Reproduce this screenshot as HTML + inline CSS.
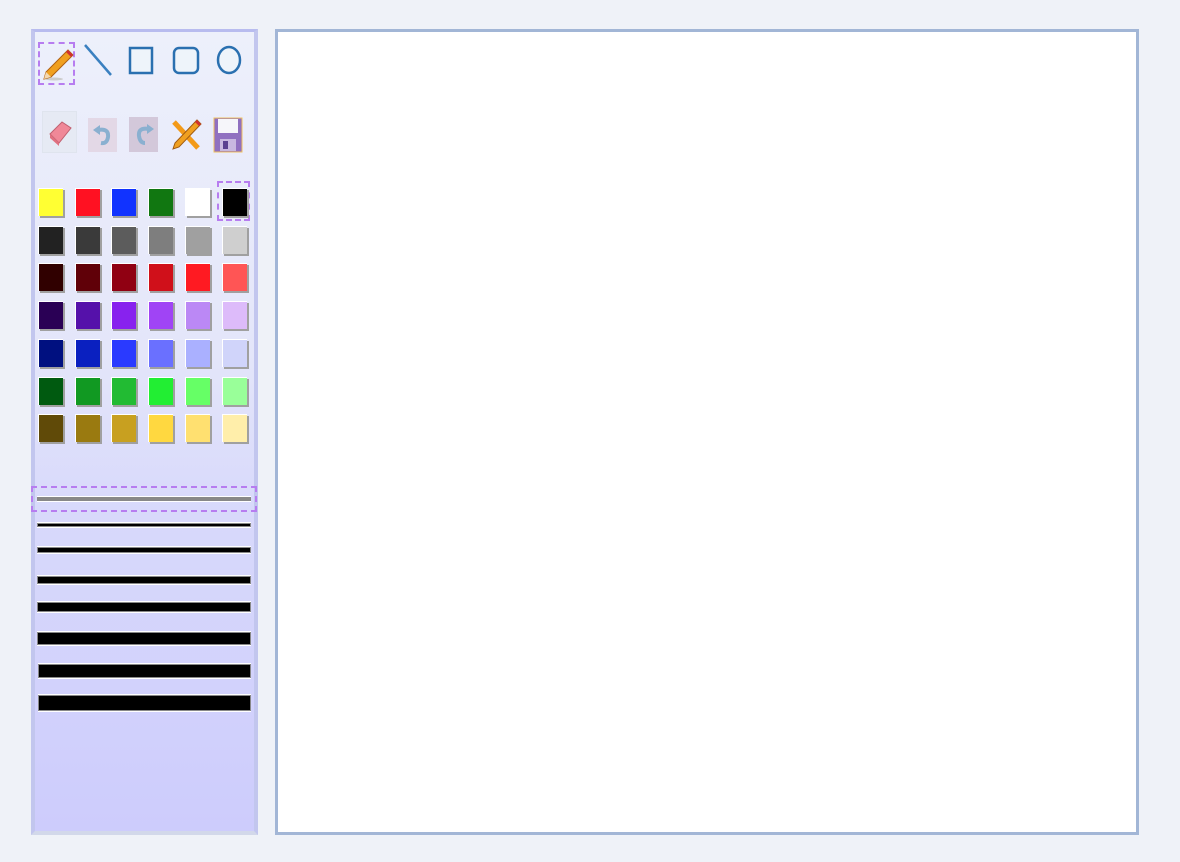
<!DOCTYPE html>
<html><head><meta charset="utf-8"><style>
*{margin:0;padding:0;box-sizing:border-box}
body{width:1180px;height:862px;background:#eff2f8;position:relative;overflow:hidden;font-family:"Liberation Sans",sans-serif}
#panel{position:absolute;left:31px;top:29px;width:227px;height:806px;background:linear-gradient(#edf0fb 0%,#e4e6fa 40%,#d8d9fb 60%,#cdccfc 100%);border-left:4px solid #c2c6ee;border-right:4px solid #c2c6ee;border-top:3px solid #b8bcef;border-bottom:4px solid #d2d8ea}
#canvas{position:absolute;left:275px;top:29px;width:864px;height:806px;background:#fff;border:3px solid #a2b6d6}
.a{position:absolute}
.sw{position:absolute;width:25px;height:28px;border-top:1px solid #fff;border-left:1px solid #fff;box-shadow:2px 2px 0 #a0a0a0}
.sel{position:absolute;border:2px dashed #b77df0}
.ln{position:absolute;left:37px;width:214px;background:#000;box-shadow:0 -1px 0 #fff,0 1px 0 #fff,0 0 0 1px #888 inset}
</style></head><body>
<div id="panel"></div>
<div id="canvas"></div>

<!-- row 1 icons -->
<div class="sel" style="left:38px;top:42px;width:37px;height:43px"></div>
<svg class="a" style="left:40px;top:46px" width="36" height="36" viewBox="0 0 36 36"><ellipse cx="14" cy="33" rx="9" ry="1.5" fill="#ccc"/><path d="M28 4 L33 9 L11 31 L4 33 L6 26 Z" fill="#f0a020" stroke="#b06010" stroke-width="1"/><path d="M28 4 L33 9 L31 11 L26 6Z" fill="#d03030"/><path d="M4 33 L6 26 L11 31Z" fill="#f4d8b0"/></svg>
<svg class="a" style="left:82px;top:42px" width="32" height="38"><line x1="3" y1="3" x2="29" y2="33" stroke="#3a80c0" stroke-width="2.5"/></svg>
<svg class="a" style="left:127px;top:45px" width="28" height="32"><rect x="3" y="3" width="22" height="25" fill="#eef4fa" stroke="#2a70b0" stroke-width="2.5"/></svg>
<svg class="a" style="left:171px;top:45px" width="30" height="32"><rect x="3" y="3" width="24" height="25" rx="5" fill="#eef4fa" stroke="#2a70b0" stroke-width="2.5"/></svg>
<svg class="a" style="left:214px;top:43px" width="30" height="34"><ellipse cx="15" cy="17" rx="11" ry="13" fill="#eef4fa" stroke="#2a70b0" stroke-width="2.5"/></svg>

<!-- row 2 icons -->
<div class="a" style="left:43px;top:112px;width:33px;height:40px;background:#e6eaf4;box-shadow:0 0 0 1px #dfe4ee"></div>
<svg class="a" style="left:45px;top:116px" width="30" height="32"><path d="M5 18 L17 6 L26 12 L14 27 Z" fill="#f08898" stroke="#c06070"/><path d="M5 18 L14 27 L14 30 L5 22Z" fill="#e07080"/></svg>
<div class="a" style="left:88px;top:118px;width:29px;height:34px;background:#e3d8e6"></div>
<svg class="a" style="left:91px;top:122px" width="24" height="26"><path d="M7 8 Q18 6 17 15 Q16 22 10 21" fill="none" stroke="#8ab0d0" stroke-width="4"/><path d="M2 8 L9 3 L9 13Z" fill="#8ab0d0"/></svg>
<div class="a" style="left:129px;top:117px;width:29px;height:35px;background:#d3c8da"></div>
<svg class="a" style="left:132px;top:121px" width="24" height="26"><path d="M17 8 Q6 6 7 15 Q8 22 13 22" fill="none" stroke="#8ab0d0" stroke-width="4"/><path d="M22 8 L15 3 L15 13Z" fill="#8ab0d0"/></svg>
<svg class="a" style="left:170px;top:116px" width="32" height="36"><path d="M4 6 L28 32" stroke="#f39a18" stroke-width="5"/><path d="M27 4 L31 8 L9 31 L3 33 L5 27Z" fill="#f0a020" stroke="#a05a10"/><path d="M27 4 L31 8 L29 10 L25 6Z" fill="#d03030"/></svg>
<svg class="a" style="left:213px;top:117px" width="30" height="36"><rect x="1" y="1" width="28" height="34" fill="#9070c0" stroke="#f0c060"/><rect x="5" y="2" width="20" height="14" fill="#f6f6fa"/><rect x="7" y="22" width="16" height="12" fill="#c8b8e0"/><rect x="10" y="24" width="5" height="8" fill="#5a4090"/></svg>

<!-- swatches -->
<div class="sel" style="left:217px;top:181px;width:33px;height:40px"></div>
<div id="sw"></div>
<script>
var rows=[["#ffff33","#ff1122","#1133ff","#117711","#ffffff","#000000"],
["#222222","#3a3a3a","#5c5c5c","#7e7e7e","#a0a0a0","#cfcfcf"],
["#300000","#600008","#900012","#d0101a","#ff1a22","#ff5555"],
["#2a0055","#5511aa","#8822ee","#a044f5","#bb88f5","#ddbbfa"],
["#001080","#0a20c0","#2a3aff","#6a70ff","#aab0ff","#d0d4fa"],
["#005a10","#119922","#22bb33","#22ee33","#66ff66","#99ff99"],
["#604a08","#9a7a10","#c8a020","#ffd840","#ffe070","#ffeeaa"]];
var xs=[38,75,111,148,185,222],h="";
rows.forEach(function(r,i){r.forEach(function(c,j){h+='<div class="sw" style="left:'+xs[j]+'px;top:'+(188+i*37.7)+'px;background:'+c+'"></div>';});});
document.getElementById("sw").outerHTML=h;
</script>

<!-- line widths -->
<div class="sel" style="left:31px;top:486px;width:226px;height:26px"></div>
<div class="ln" style="top:497px;height:4px;background:#888"></div>
<div class="ln" style="top:523px;height:4px"></div>
<div class="ln" style="top:547px;height:6px"></div>
<div class="ln" style="top:576px;height:8px"></div>
<div class="ln" style="top:602px;height:10px"></div>
<div class="ln" style="top:632px;height:13px"></div>
<div class="ln" style="top:664px;height:14px;left:38px;width:213px"></div>
<div class="ln" style="top:695px;height:16px;left:38px;width:213px"></div>
</body></html>
